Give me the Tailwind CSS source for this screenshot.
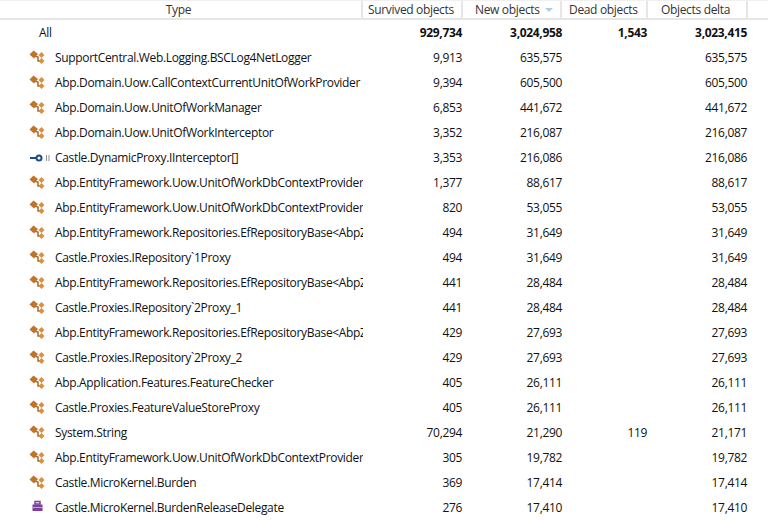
<!doctype html>
<html lang="en">
<head>
  <meta charset="utf-8">
  <title>Objects</title>
  <script src="https://cdn.jsdelivr.net/npm/@tailwindcss/browser@4"></script>
</head>
<body class="bg-white overflow-hidden">
  <svg width="0" height="0" class="absolute">
    <symbol id="cls" viewBox="0 0 16 16">
      <path d="M5 6 L9 7 L9 11 L11 11" fill="none" stroke="#a5682c" stroke-width="1.500"/>
      <path d="M0.500 4.500 L4.500 0.500 L9 4 L5 8.500 Z" fill="#c0742a"/>
      <path d="M9.500 5 L12.500 2 L15.500 5 L12.500 8 Z" fill="#dc8f3e"/>
      <path d="M9.500 11 L12.500 8 L15.500 11 L12.500 14 Z" fill="#dc8f3e"/>
    </symbol>
  </svg>
  <div class="w-[768px] h-[521px] overflow-hidden font-['Open_Sans','Noto_Sans',sans-serif] text-[12px] text-[#111] tracking-[-0.33px]">
    <div class="h-[20px] flex border-b-2 border-[#e6e6e6] border-t border-t-[#f0f0f0] leading-[17px] text-[#333]">
      <div class="w-[363px] text-center pr-[4px] border-r-2 border-[#e6e6e6]">Type</div>
      <div class="w-[100px] pl-[5px] border-r-2 border-[#e6e6e6]">Survived objects</div>
      <div class="w-[99px] pl-[12px] border-r-2 border-[#e6e6e6] flex items-center gap-[5px]">New objects <span class="w-0 h-0 border-x-[4px] border-x-transparent border-t-[4px] border-t-[#a9cfe8]"></span></div>
      <div class="w-[86px] pl-[7px] border-r-2 border-[#e6e6e6]">Dead objects</div>
      <div class="w-[100px] pl-[13px] border-r-2 border-[#e6e6e6]">Objects delta</div>
    </div>

    <div class="h-[25px] flex items-center font-bold">
      <div class="w-[363px] pl-[39px] font-normal">All</div>
      <div class="w-[99px] text-right">929,734</div>
      <div class="w-[100px] text-right">3,024,958</div>
      <div class="w-[85px] text-right">1,543</div>
      <div class="w-[100px] text-right">3,023,415</div>
    </div>

    <div class="h-[25px] flex items-center"><div class="w-[363px] flex items-center overflow-hidden whitespace-nowrap"><svg class="w-4 h-4 ml-[29px] mr-[10px] shrink-0"><use href="#cls"/></svg>SupportCentral.Web.Logging.BSCLog4NetLogger</div><div class="w-[99px] text-right">9,913</div><div class="w-[100px] text-right">635,575</div><div class="w-[85px] text-right"></div><div class="w-[100px] text-right">635,575</div></div>
    <div class="h-[25px] flex items-center"><div class="w-[363px] flex items-center overflow-hidden whitespace-nowrap"><svg class="w-4 h-4 ml-[29px] mr-[10px] shrink-0"><use href="#cls"/></svg>Abp.Domain.Uow.CallContextCurrentUnitOfWorkProvider</div><div class="w-[99px] text-right">9,394</div><div class="w-[100px] text-right">605,500</div><div class="w-[85px] text-right"></div><div class="w-[100px] text-right">605,500</div></div>
    <div class="h-[25px] flex items-center"><div class="w-[363px] flex items-center overflow-hidden whitespace-nowrap"><svg class="w-4 h-4 ml-[29px] mr-[10px] shrink-0"><use href="#cls"/></svg>Abp.Domain.Uow.UnitOfWorkManager</div><div class="w-[99px] text-right">6,853</div><div class="w-[100px] text-right">441,672</div><div class="w-[85px] text-right"></div><div class="w-[100px] text-right">441,672</div></div>
    <div class="h-[25px] flex items-center"><div class="w-[363px] flex items-center overflow-hidden whitespace-nowrap"><svg class="w-4 h-4 ml-[29px] mr-[10px] shrink-0"><use href="#cls"/></svg>Abp.Domain.Uow.UnitOfWorkInterceptor</div><div class="w-[99px] text-right">3,352</div><div class="w-[100px] text-right">216,087</div><div class="w-[85px] text-right"></div><div class="w-[100px] text-right">216,087</div></div>
    <div class="h-[25px] flex items-center"><div class="w-[363px] flex items-center overflow-hidden whitespace-nowrap"><svg class="w-[22px] h-4 ml-[29px] mr-[4px] shrink-0" viewBox="0 0 22 16"><path d="M1 8h6" stroke="#1d4f86" stroke-width="2"/><circle cx="10" cy="8" r="2.500" fill="none" stroke="#1d4f86" stroke-width="2"/><path d="M17.500 5v6M20 5v6" stroke="#8f8f8f" stroke-width="1"/></svg>Castle.DynamicProxy.IInterceptor[]</div><div class="w-[99px] text-right">3,353</div><div class="w-[100px] text-right">216,086</div><div class="w-[85px] text-right"></div><div class="w-[100px] text-right">216,086</div></div>
    <div class="h-[25px] flex items-center"><div class="w-[363px] flex items-center overflow-hidden whitespace-nowrap"><svg class="w-4 h-4 ml-[29px] mr-[10px] shrink-0"><use href="#cls"/></svg>Abp.EntityFramework.Uow.UnitOfWorkDbContextProvider&lt;</div><div class="w-[99px] text-right">1,377</div><div class="w-[100px] text-right">88,617</div><div class="w-[85px] text-right"></div><div class="w-[100px] text-right">88,617</div></div>
    <div class="h-[25px] flex items-center"><div class="w-[363px] flex items-center overflow-hidden whitespace-nowrap"><svg class="w-4 h-4 ml-[29px] mr-[10px] shrink-0"><use href="#cls"/></svg>Abp.EntityFramework.Uow.UnitOfWorkDbContextProvider&lt;</div><div class="w-[99px] text-right">820</div><div class="w-[100px] text-right">53,055</div><div class="w-[85px] text-right"></div><div class="w-[100px] text-right">53,055</div></div>
    <div class="h-[25px] flex items-center"><div class="w-[363px] flex items-center overflow-hidden whitespace-nowrap"><svg class="w-4 h-4 ml-[29px] mr-[10px] shrink-0"><use href="#cls"/></svg>Abp.EntityFramework.Repositories.EfRepositoryBase&lt;AbpZ</div><div class="w-[99px] text-right">494</div><div class="w-[100px] text-right">31,649</div><div class="w-[85px] text-right"></div><div class="w-[100px] text-right">31,649</div></div>
    <div class="h-[25px] flex items-center"><div class="w-[363px] flex items-center overflow-hidden whitespace-nowrap"><svg class="w-4 h-4 ml-[29px] mr-[10px] shrink-0"><use href="#cls"/></svg>Castle.Proxies.IRepository`1Proxy</div><div class="w-[99px] text-right">494</div><div class="w-[100px] text-right">31,649</div><div class="w-[85px] text-right"></div><div class="w-[100px] text-right">31,649</div></div>
    <div class="h-[25px] flex items-center"><div class="w-[363px] flex items-center overflow-hidden whitespace-nowrap"><svg class="w-4 h-4 ml-[29px] mr-[10px] shrink-0"><use href="#cls"/></svg>Abp.EntityFramework.Repositories.EfRepositoryBase&lt;AbpZ</div><div class="w-[99px] text-right">441</div><div class="w-[100px] text-right">28,484</div><div class="w-[85px] text-right"></div><div class="w-[100px] text-right">28,484</div></div>
    <div class="h-[25px] flex items-center"><div class="w-[363px] flex items-center overflow-hidden whitespace-nowrap"><svg class="w-4 h-4 ml-[29px] mr-[10px] shrink-0"><use href="#cls"/></svg>Castle.Proxies.IRepository`2Proxy_1</div><div class="w-[99px] text-right">441</div><div class="w-[100px] text-right">28,484</div><div class="w-[85px] text-right"></div><div class="w-[100px] text-right">28,484</div></div>
    <div class="h-[25px] flex items-center"><div class="w-[363px] flex items-center overflow-hidden whitespace-nowrap"><svg class="w-4 h-4 ml-[29px] mr-[10px] shrink-0"><use href="#cls"/></svg>Abp.EntityFramework.Repositories.EfRepositoryBase&lt;AbpZ</div><div class="w-[99px] text-right">429</div><div class="w-[100px] text-right">27,693</div><div class="w-[85px] text-right"></div><div class="w-[100px] text-right">27,693</div></div>
    <div class="h-[25px] flex items-center"><div class="w-[363px] flex items-center overflow-hidden whitespace-nowrap"><svg class="w-4 h-4 ml-[29px] mr-[10px] shrink-0"><use href="#cls"/></svg>Castle.Proxies.IRepository`2Proxy_2</div><div class="w-[99px] text-right">429</div><div class="w-[100px] text-right">27,693</div><div class="w-[85px] text-right"></div><div class="w-[100px] text-right">27,693</div></div>
    <div class="h-[25px] flex items-center"><div class="w-[363px] flex items-center overflow-hidden whitespace-nowrap"><svg class="w-4 h-4 ml-[29px] mr-[10px] shrink-0"><use href="#cls"/></svg>Abp.Application.Features.FeatureChecker</div><div class="w-[99px] text-right">405</div><div class="w-[100px] text-right">26,111</div><div class="w-[85px] text-right"></div><div class="w-[100px] text-right">26,111</div></div>
    <div class="h-[25px] flex items-center"><div class="w-[363px] flex items-center overflow-hidden whitespace-nowrap"><svg class="w-4 h-4 ml-[29px] mr-[10px] shrink-0"><use href="#cls"/></svg>Castle.Proxies.FeatureValueStoreProxy</div><div class="w-[99px] text-right">405</div><div class="w-[100px] text-right">26,111</div><div class="w-[85px] text-right"></div><div class="w-[100px] text-right">26,111</div></div>
    <div class="h-[25px] flex items-center"><div class="w-[363px] flex items-center overflow-hidden whitespace-nowrap"><svg class="w-4 h-4 ml-[29px] mr-[10px] shrink-0"><use href="#cls"/></svg>System.String</div><div class="w-[99px] text-right">70,294</div><div class="w-[100px] text-right">21,290</div><div class="w-[85px] text-right">119</div><div class="w-[100px] text-right">21,171</div></div>
    <div class="h-[25px] flex items-center"><div class="w-[363px] flex items-center overflow-hidden whitespace-nowrap"><svg class="w-4 h-4 ml-[29px] mr-[10px] shrink-0"><use href="#cls"/></svg>Abp.EntityFramework.Uow.UnitOfWorkDbContextProvider&lt;</div><div class="w-[99px] text-right">305</div><div class="w-[100px] text-right">19,782</div><div class="w-[85px] text-right"></div><div class="w-[100px] text-right">19,782</div></div>
    <div class="h-[25px] flex items-center"><div class="w-[363px] flex items-center overflow-hidden whitespace-nowrap"><svg class="w-4 h-4 ml-[29px] mr-[10px] shrink-0"><use href="#cls"/></svg>Castle.MicroKernel.Burden</div><div class="w-[99px] text-right">369</div><div class="w-[100px] text-right">17,414</div><div class="w-[85px] text-right"></div><div class="w-[100px] text-right">17,414</div></div>
    <div class="h-[25px] flex items-center"><div class="w-[363px] flex items-center overflow-hidden whitespace-nowrap"><svg class="w-4 h-4 ml-[29px] mr-[10px] shrink-0" viewBox="0 0 16 16"><path d="M6 1.500h5v2.500H6z" fill="none" stroke="#7d3f98" stroke-width="1.500"/><path d="M3.500 4.500h10v6.500h-10z" fill="#7d3f98"/><path d="M3.500 7.500h10" stroke="#c9a6d8"/></svg>Castle.MicroKernel.BurdenReleaseDelegate</div><div class="w-[99px] text-right">276</div><div class="w-[100px] text-right">17,410</div><div class="w-[85px] text-right"></div><div class="w-[100px] text-right">17,410</div></div>
  </div>
</body>
</html>
